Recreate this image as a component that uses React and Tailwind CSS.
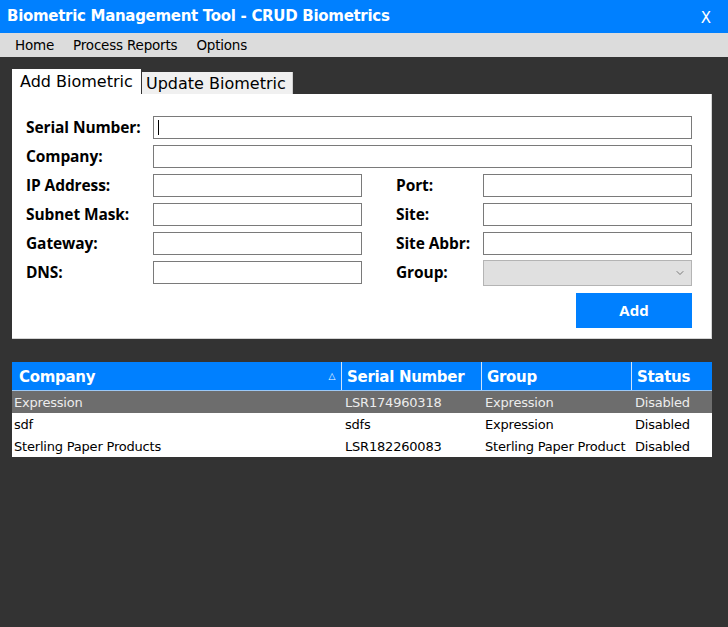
import { ChevronDown } from 'lucide-react'

const rows = [
  { company: 'Expression', serial: 'LSR174960318', group: 'Expression', status: 'Disabled', selected: true },
  { company: 'sdf', serial: 'sdfs', group: 'Expression', status: 'Disabled' },
  { company: 'Sterling Paper Products', serial: 'LSR182260083', group: 'Sterling Paper Product', status: 'Disabled' },
]

const labelCls = "font-['Open_Sans',sans-serif] font-bold text-[15.5px] text-black tracking-[-0.1px]"
const inputCls = 'h-[23px] border border-[#7a7a7a] bg-white outline-none px-1 text-sm'

function Field({ label, children, labelW = 'w-[127px]' }) {
  return (
    <div className="flex items-center h-[29px]">
      <label className={`${labelCls} ${labelW} shrink-0`}>{label}</label>
      {children}
    </div>
  )
}

export default function App() {
  return (
    <div className="w-[728px] h-[627px] bg-[#333333] flex flex-col overflow-hidden">
      {/* title bar */}
      <div className="h-[33px] bg-[#0080ff] flex items-center justify-between pl-[7px] pr-[17px] text-white font-['DejaVu_Sans',sans-serif]">
        <span className="font-bold text-[15px] tracking-[-0.3px]">Biometric Management Tool - CRUD Biometrics</span>
        <span className="text-[15px] mt-[3px]">X</span>
      </div>

      {/* menu */}
      <div className="h-[24px] bg-[#dcdcdc] flex items-center pl-[15px] gap-[19px] text-[13.5px] text-black font-['DejaVu_Sans',sans-serif] tracking-[-0.2px] pt-[1px]">
        <span>Home</span>
        <span>Process Reports</span>
        <span>Options</span>
      </div>

      {/* tabs */}
      <div className="mt-[12px] mx-[12px] flex items-end font-['DejaVu_Sans',sans-serif] text-[16px]">
        <div className="h-[25px] w-[129px] bg-white pl-[8px] leading-[25px]">Add Biometric</div>
        <div className="h-[22px] w-[151px] ml-[1px] bg-[#f0f0f0] pl-[4px] leading-[24px] border-r border-[#cfcfcf]">Update Biometric</div>
      </div>

      {/* form panel */}
      <div className="mx-[12px] mr-[16px] bg-white border-r border-b border-[#d4d4d4] h-[245px] pt-[19px] pl-[14px] pr-[19px]">
        <Field label="Serial Number:">
          <div className={`${inputCls} flex-1 flex items-center`}>
            <div className="w-px h-[15px] bg-black" />
          </div>
        </Field>
        <Field label="Company:">
          <div className={`${inputCls} flex-1`} />
        </Field>
        <div className="flex">
          <div className="flex flex-col">
            <Field label="IP Address:"><div className={`${inputCls} w-[209px]`} /></Field>
            <Field label="Subnet Mask:"><div className={`${inputCls} w-[209px]`} /></Field>
            <Field label="Gateway:"><div className={`${inputCls} w-[209px]`} /></Field>
            <Field label="DNS:"><div className={`${inputCls} w-[209px]`} /></Field>
          </div>
          <div className="flex flex-col ml-[34px] flex-1">
            <Field label="Port:" labelW="w-[87px]"><div className={`${inputCls} flex-1`} /></Field>
            <Field label="Site:" labelW="w-[87px]"><div className={`${inputCls} flex-1`} /></Field>
            <Field label="Site Abbr:" labelW="w-[87px]"><div className={`${inputCls} flex-1`} /></Field>
            <Field label="Group:" labelW="w-[87px]">
              <div className="flex-1 h-[26px] bg-[#e0e0e0] border border-[#b4b4b4] flex items-center justify-end pr-[5px]">
                <ChevronDown className="w-[12px] h-[12px] text-[#555]" strokeWidth={1.5} />
              </div>
            </Field>
          </div>
        </div>
        <div className="flex justify-end mt-[6px]">
          <button className="w-[116px] h-[35px] bg-[#0080ff] text-white font-['Open_Sans',sans-serif] font-bold text-[15px]">Add</button>
        </div>
      </div>

      {/* grid */}
      <div className="mt-[23px] mx-[12px] mr-[16px] bg-white font-['DejaVu_Sans',sans-serif]">
        <div className="grid grid-cols-[330px_140px_150px_1fr] h-[29px] bg-[#0080ff] text-white font-bold text-[15px] border-b border-[#9cc8f5] tracking-[-0.3px]">
          <div className="flex items-center justify-between pl-[7px] pr-[6px] pt-[2px] border-r border-[#cfe4fb]">
            <span>Company</span>
            <span className="text-[9px] font-normal">△</span>
          </div>
          <div className="flex items-center pl-[5px] pt-[2px] border-r border-[#cfe4fb]">Serial Number</div>
          <div className="flex items-center pl-[5px] pt-[2px] border-r border-[#cfe4fb]">Group</div>
          <div className="flex items-center pl-[5px] pt-[2px]">Status</div>
        </div>
        {rows.map(r => (
          <div
            key={r.company}
            className={`grid grid-cols-[330px_140px_150px_1fr] h-[22px] items-center pt-[1px] text-[13px] tracking-[-0.2px] ${r.selected ? 'bg-[#6d6d6d] text-[#ececec]' : 'bg-white text-black'}`}
          >
            <span className="pl-[2px]">{r.company}</span>
            <span className="pl-[3px]">{r.serial}</span>
            <span className="pl-[3px] whitespace-nowrap overflow-hidden">{r.group}</span>
            <span className="pl-[3px]">{r.status}</span>
          </div>
        ))}
      </div>
    </div>
  )
}
